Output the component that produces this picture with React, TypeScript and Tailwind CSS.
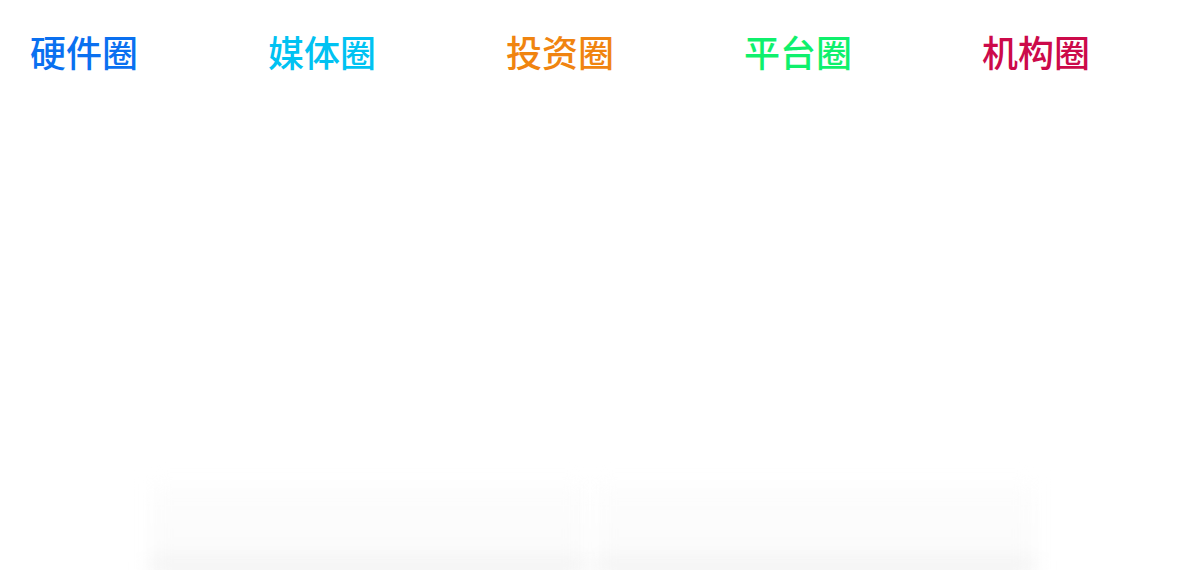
const circles = [
  { name: '硬件圈', color: 'text-[#0a70f0]' },
  { name: '媒体圈', color: 'text-[#00c2f2]' },
  { name: '投资圈', color: 'text-[#f08410]' },
  { name: '平台圈', color: 'text-[#0ff06c]' },
  { name: '机构圈', color: 'text-[#cc0a4a]' },
]

export default function App() {
  return (
    <div
      className="w-[1180px] h-[570px] bg-white overflow-hidden flex flex-col"
      style={{ fontFamily: '"Noto Sans CJK SC", "Noto Sans", sans-serif' }}
    >
      <div className="flex pl-[30px] pt-[27px]">
        {circles.map(c => (
          <div key={c.name} className={`w-[238px] shrink-0 text-[36px] leading-[48px] font-medium ${c.color}`}>
            {c.name}
          </div>
        ))}
      </div>

      {/* faded pictures at the bottom */}
      <div className="mt-auto flex gap-[10px] pl-[150px] h-[90px] translate-y-[4px]">
        <div className="w-[435px] h-full bg-gradient-to-b from-[#fdfdfd] via-[#fbfbfb] via-75% to-[#eeeeee] blur-[9px]" />
        <div className="w-[440px] h-full bg-gradient-to-b from-[#fdfdfd] via-[#fbfbfb] via-75% to-[#eeeeee] blur-[9px]" />
      </div>
    </div>
  )
}
